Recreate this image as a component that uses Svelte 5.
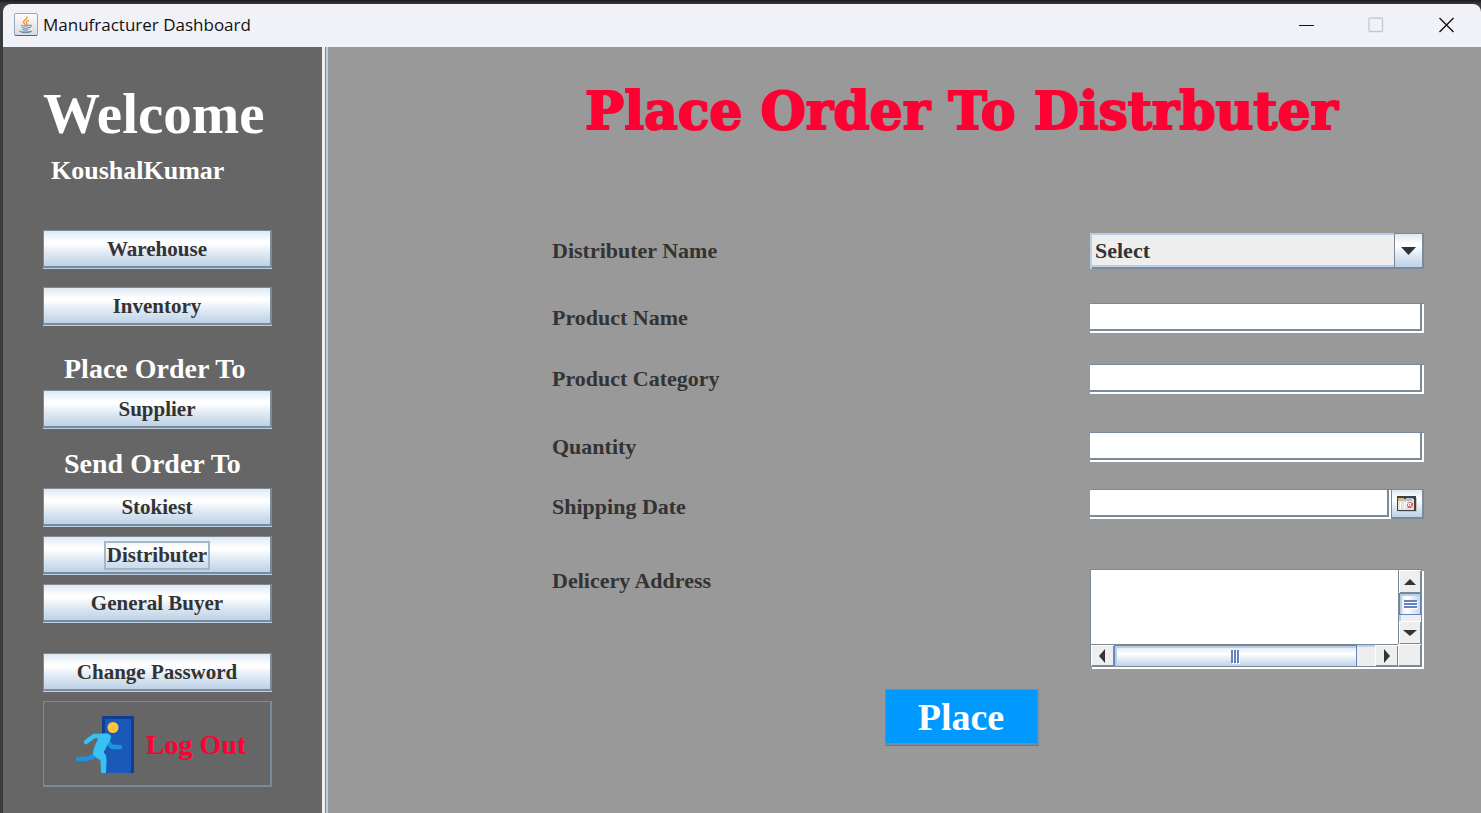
<script>
  let address = $state('');
  let active = $state('Distributer');
</script>

{#snippet navButton(name)}
  <button class="metal nav" type="button" onclick={() => (active = name)}>
    <span class:focused={active === name}>{name}</span>
  </button>
{/snippet}

<div class="desktop">
  <div class="window">
    <header class="titlebar">
      <svg class="java" viewBox="0 0 24 24" aria-hidden="true">
        <defs>
          <linearGradient id="tile" x1="0" y1="0" x2="0" y2="1">
            <stop offset="0" stop-color="#fdfdfd" />
            <stop offset="1" stop-color="#d9dadd" />
          </linearGradient>
        </defs>
        <rect x="0.5" y="0.5" width="23" height="22" rx="1.5" fill="url(#tile)" stroke="#8fabbd" />
        <path d="M1 22.500h22" stroke="#456b84" />
        <path d="M13 4c1 2-3.500 3-3.500 5 0 1.200 1.500 2 1.500 3M14.500 7.500c-2.500 1-2.500 2-1.700 3 .5.7.2 1.400-.6 2" fill="none" stroke="#e98a2e" stroke-width="1.200" stroke-linecap="round" />
        <path d="M7 12.200c-1 1 7 1.200 8.500.2M8 14.600c1.500 1 5.500 1 7 0M9 16.600c1.500.8 3.500.8 5 0M15.800 12c3-.6 2.200 2.200-.5 2.700M5.500 17.800c-2 1.200 9 2 11 .4M8 19.500c3 .4 8 .2 9.500-.9" fill="none" stroke="#5f87a8" stroke-width="1" stroke-linecap="round" />
      </svg>
      <span class="caption">Manufracturer Dashboard</span>
      <div class="controls">
        <button type="button" aria-label="Minimize">
          <svg viewBox="0 0 16 16"><path d="M1 8.500h15" stroke="#111" /></svg>
        </button>
        <button type="button" aria-label="Maximize" disabled>
          <svg viewBox="0 0 16 16"><rect x="1" y="1" width="13.500" height="13.500" rx="1" fill="none" stroke="#c6c7cc" stroke-width="1.300" /></svg>
        </button>
        <button type="button" aria-label="Close">
          <svg viewBox="0 0 16 16"><path d="M1.500 1l14 14M15.500 1l-14 14" stroke="#111" stroke-width="1.400" /></svg>
        </button>
      </div>
    </header>

    <div class="body">
      <aside>
        <h1>Welcome</h1>
        <p class="user">KoushalKumar</p>
        <nav class="stock">
          {@render navButton('Warehouse')}
          {@render navButton('Inventory')}
        </nav>
        <h2>Place Order To</h2>
        {@render navButton('Supplier')}
        <h2 class="send">Send Order To</h2>
        <nav class="orders">
          {@render navButton('Stokiest')}
          {@render navButton('Distributer')}
          {@render navButton('General Buyer')}
        </nav>
        <div class="account">
          {@render navButton('Change Password')}
          <button class="logout" type="button">
            <svg viewBox="0 0 58 58" aria-hidden="true">
              <rect x="26" y="0" width="32" height="57" rx="1" fill="#113d92" />
              <path d="M29 3h26v54H29z" fill="#1b59b8" />
              <circle cx="37" cy="11.500" r="5.500" fill="#fdc43f" />
              <path d="M20 37c-3 5-7 6-18 6" fill="none" stroke="#1b94e0" stroke-width="4.500" stroke-linecap="round" stroke-linejoin="round" />
              <path d="M31 22c1 5 3 8 6 9h7" fill="none" stroke="#1b94e0" stroke-width="4.500" stroke-linecap="round" stroke-linejoin="round" />
              <path d="M29 20H18l-8 6" fill="none" stroke="#37c2f5" stroke-width="4.500" stroke-linecap="round" stroke-linejoin="round" />
              <path d="M20 19q4-2 11-1.500 4 .5 4 3.500-.5 3-4 8.500L28 36q3 4 2.500 10L30 57h-5l-.5-13q-7-3-7.500-7 0-4 5-14z" fill="#37c2f5" />
            </svg>
            <span>Log Out</span>
          </button>
        </div>
      </aside>

      <div class="splitter" role="separator"></div>

      <main>
        <h1 class="title">Place Order To Distrbuter</h1>
        <form onsubmit={(e) => e.preventDefault()}>
          <div class="row distributer">
            <label for="distributer">Distributer Name</label>
            <div class="combo">
              <select id="distributer"><option>Select</option></select>
              <span class="drop"><svg viewBox="0 0 15 8"><path d="M0 0h15L7.500 8z" /></svg></span>
            </div>
          </div>
          <div class="row product">
            <label for="product">Product Name</label>
            <input id="product" type="text" />
          </div>
          <div class="row category">
            <label for="category">Product Category</label>
            <input id="category" type="text" />
          </div>
          <div class="row quantity">
            <label for="quantity">Quantity</label>
            <input id="quantity" type="text" />
          </div>
          <div class="row date">
            <label for="date">Shipping Date</label>
            <div class="picker">
              <input id="date" type="text" />
              <button class="metal" type="button" aria-label="Choose date">
                <svg viewBox="0 0 20 16">
                  <path d="M2 2h18v14H2z" fill="#c2c2c2" />
                  <path d="M0 0h19v15H0z" fill="#404040" />
                  <path d="M1 3h16v11H1z" fill="#e2e2e2" />
                  <path d="M1 2h6v1H1z" fill="#e9b44c" />
                  <path d="M9 2h7v1H9z" fill="#a9c3e6" />
                  <path d="M1 3h14v2H1z" fill="#bdbdbd" />
                  <path d="M3 6h1v7H3zM7 6h1v7H7zM9 6h1v3H9z" fill="#fff" />
                  <path d="M10 6h6v6h-6z" fill="#f3b5b5" />
                  <path d="M12 6h2v1h-2zM10 8h1v2h-1zM14 7h2v3h-2zM11 10h3v2h-3zM12 8h1v1h-1z" fill="#e25f5f" />
                  <path d="M12 7h2v1h-2zM11 8h1v2h-1zM13 8h1v2h-1z" fill="#fff" />
                </svg>
              </button>
            </div>
          </div>
          <div class="row delivery">
            <label for="address">Delicery Address</label>
            <div class="pane">
              <textarea id="address" bind:value={address}></textarea>
              <div class="vbar">
                <button type="button" aria-label="Scroll up"><svg viewBox="0 0 14 14"><path d="M1 10h12L7 4z" /></svg></button>
                <div class="track"><div class="thumb"><i></i><i></i><i></i></div></div>
                <button type="button" aria-label="Scroll down"><svg viewBox="0 0 14 14"><path d="M0 4h14l-7 6z" /></svg></button>
              </div>
              <div class="hbar">
                <button type="button" aria-label="Scroll left"><svg viewBox="0 0 14 14"><path d="M9 0v14L3 7z" /></svg></button>
                <div class="track"><div class="thumb"><i></i><i></i><i></i></div></div>
                <button type="button" aria-label="Scroll right"><svg viewBox="0 0 14 14"><path d="M4 0v14l6-7z" /></svg></button>
              </div>
              <div class="corner"></div>
            </div>
          </div>
          <button class="place" type="submit">Place</button>
        </form>
      </main>
    </div>
  </div>
</div>

<style>
  :global(body) { margin: 0; background: #1b1b1d; }
  * { box-sizing: border-box; }
  .desktop {
    min-height: 100vh;
    display: flex;
    padding: 4px 0 0 3px;
    background: linear-gradient(#1b1b1d, #3b3b3d 4px, #3b3b3d);
    font-family: "Baskerville Old Face", "Liberation Serif", serif;
    font-weight: 700;
    color: #333;
  }
  .window { flex: 1; display: flex; flex-direction: column; border-radius: 8px 8px 0 0; overflow: hidden; }
  button, input, select, textarea { font: inherit; color: inherit; margin: 0; padding: 0; border: 0; border-radius: 0; }
  h1, h2, p { margin: 0; font-weight: 700; }
  svg { display: block; }

  .titlebar { height: 43px; display: flex; align-items: center; background: #f1f2f8; padding: 0 0 2px 11px; }
  .java { width: 24px; height: 24px; margin-right: 5px; }
  .caption { font: 400 17px/24px "Segoe UI", "Open Sans", sans-serif; color: #111; }
  .controls { margin-left: auto; display: flex; height: 100%; }
  .controls button { width: 70px; display: grid; place-items: center; background: none; }
  .controls svg { width: 16px; height: 16px; }

  .body { flex: 1; display: flex; }
  aside { width: 319px; padding: 37px 50px 26px 40px; background: #666; color: #fff; }
  aside h1 { font-size: 57px; line-height: 60px; }
  .user { font-size: 26px; line-height: 28px; padding: 13px 0 0 8px; }
  .stock { display: grid; gap: 18px; margin-top: 45px; }
  h2 { font-size: 28px; line-height: 32px; padding-left: 21px; margin: 27px 0 5px; }
  .send { margin: 20px 0 8px; }
  .orders, .account { display: grid; gap: 9px; }
  .account { margin-top: 30px; }

  .metal {
    border: solid #7a8a99;
    border-width: 1px 2px 2px 1px;
    background: linear-gradient(#dde8f3, #fff 30%, #fff 36%, #dde8f3 65%, #bdd2e7);
  }
  .nav {
    width: 100%;
    height: 38px;
    margin-bottom: 1px;
    padding-top: 2px;
    display: grid;
    place-items: center;
    font-size: 21px;
    line-height: 23px;
    color: #333;
    box-shadow: 0 1px #b8cfe5;
  }
  .focused { outline: 2px solid #a3b8cc; outline-offset: 1px; }
  .logout {
    height: 86px;
    border: solid #7a8a99;
    border-width: 1px 2px 2px 1px;
    background: none;
    display: flex;
    align-items: center;
    justify-content: center;
    gap: 12px;
    padding: 3px 0 0 8px;
    font-size: 28px;
    line-height: 32px;
    color: #f03;
  }
  .logout svg { width: 58px; height: 58px; }

  .splitter { width: 6px; background: linear-gradient(90deg, #eee 3px, #6382bf 3px, #6382bf 4px, #b8cfe5 4px); }

  main { flex: 1; background: #999; padding-top: 31px; }
  .title {
    padding-left: 114px;
    text-align: center;
    font: 700 52px/66px "Cooper Black", "DejaVu Serif", serif;
    color: #f03;
    -webkit-text-stroke: 2px #f03;
  }
  form { padding: 89px 0 0 114px; font-size: 22px; line-height: 24px; }
  .row { display: grid; grid-template-columns: 1fr 334px; align-items: center; padding: 0 57px 0 110px; }
  .product { margin-top: 34px; }
  .category { margin-top: 31px; }
  .quantity { margin-top: 38px; }
  .date { margin-top: 27px; }
  .date label { padding-top: 6px; }
  .delivery { margin-top: 50px; align-items: start; }

  input {
    width: 100%;
    height: 30px;
    padding: 0 6px;
    background: #fff;
    border-top: 1px solid #7a8a99;
    box-shadow: inset -2px -2px #fff, inset -4px -4px #7a8a99;
  }
  .combo { display: grid; grid-template-columns: 1fr 30px; height: 36px; }
  .combo > * { grid-row: 1; }
  select {
    grid-column: 1 / 3;
    appearance: none;
    width: 100%;
    background: #eee;
    border: solid #b8cfe5;
    border-width: 2px 2px 0 2px;
    box-shadow: inset 0 -2px #7a8a99, inset 0 -4px #b8cfe5;
    padding: 0 32px 2px 3px;
    font-size: 22px;
  }
  .drop {
    grid-column: 2;
    display: grid;
    place-items: center;
    pointer-events: none;
    z-index: 1;
    border: solid #7a8a99;
    border-width: 1px 2px 2px 1px;
    background: linear-gradient(#dde8f3, #fff 30%, #fff 36%, #dde8f3 65%, #bdd2e7);
  }
  .drop svg { width: 15px; height: 8px; fill: #333; }
  .picker { display: grid; grid-template-columns: 1fr 33px; }
  .picker button { display: grid; place-items: center; }
  .picker svg { width: 20px; height: 16px; }

  .pane {
    display: grid;
    grid-template-columns: 1fr 23px;
    grid-template-rows: 74px 22px;
    background: #eee;
    border: 1px solid #7a8a99;
    width: 332px;
    box-shadow: 2px 2px #fff;
  }
  textarea { resize: none; overflow: hidden; width: 100%; height: 100%; background: #fff; padding: 2px; outline: none; }
  .vbar { display: flex; flex-direction: column; border-left: 1px solid #7a8a99; }
  .hbar { display: flex; border-top: 1px solid #7a8a99; }
  .vbar button, .hbar button {
    flex: none;
    display: grid;
    place-items: center;
    background: #eee;
    box-shadow: inset 1px 1px #fff, inset -1px -1px #7a8a99;
  }
  .vbar button { width: 22px; height: 23px; }
  .hbar button { width: 23px; height: 21px; }
  .pane svg { width: 14px; height: 14px; fill: #333; }
  .track { flex: 1; display: flex; background: #eee; box-shadow: inset 2px 2px #b8cfe5; }
  .thumb { display: flex; align-items: center; justify-content: center; gap: 1px; border: 1px solid #6382bf; box-shadow: inset 2px 2px #b8cfe5; }
  .vbar .thumb { width: 100%; height: 22px; flex-direction: column; background: linear-gradient(90deg, #dde8f3, #fff 35%, #c5d8ea); }
  .hbar .thumb { width: 93%; height: 100%; border-bottom: 0; background: linear-gradient(#dde8f3, #fff 40%, #bdd2e7); }
  .thumb i { background: #6382bf; box-shadow: 1px 1px #fff; }
  .vbar i { width: 13px; height: 2px; }
  .hbar i { width: 2px; height: 13px; }
  .corner { box-shadow: inset 1px 1px #fff, inset -1px -1px #7a8a99; }

  .place {
    display: block;
    width: 154px;
    height: 56px;
    margin: 22px auto 0;
    border: solid #7a8a99;
    border-width: 1px 2px 2px 1px;
    box-shadow: 0 1px #09f;
    background: #09f;
    color: #fff;
    font-size: 38px;
    line-height: 40px;
  }
</style>
